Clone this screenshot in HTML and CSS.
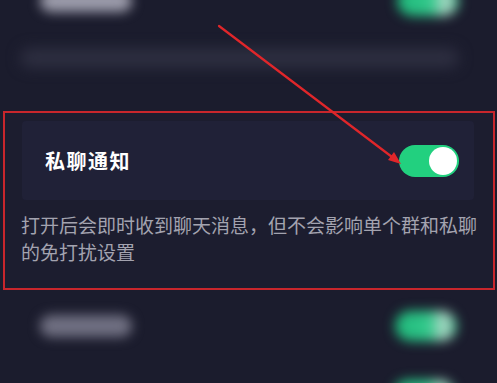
FILE: index.html
```html
<!DOCTYPE html>
<html>
<head>
  <title>私聊通知</title>
  <link rel="stylesheet" href="styles.css">
</head>
<body>
  <div class="screen">
    <!-- 上一项（模糊） -->
    <div class="row row-top">
      <div class="blob blob-text"></div>
      <div class="blob blob-switch"></div>
    </div>
    <div class="blob-line"></div>

    <div class="notice">
      <div class="card">
        <span class="card-title">私聊通知</span>
        <div class="switch on"><div class="knob"></div></div>
      </div>
      <p class="desc">打开后会即时收到聊天消息，但不会影响单个群和私聊的免打扰设置</p>
    </div>

    <!-- 下一项（模糊） -->
    <div class="row row-bottom">
      <div class="blob blob-text"></div>
      <div class="blob blob-switch"></div>
    </div>
    <div class="blob blob-switch blob-corner"></div>

    <svg class="arrow" width="497" height="383" viewBox="0 0 497 383">
      <line x1="219" y1="26" x2="396" y2="160" stroke="#e0262a" stroke-width="2.2" stroke-linecap="round"/>
      <polygon points="401,164 388,160 394,152" fill="#e0262a"/>
    </svg>
  </div>
</body>
</html>
```

FILE: styles.css
```css
body {
  margin: 0;
  background-color: #1b1c2d;
  font-family: "Noto Sans CJK SC", "Noto Sans", sans-serif;
}

.screen {
  position: relative;
  width: 497px;
  height: 383px;
  overflow: hidden;
  background-color: #1b1c2d;
}

.row {
  display: flex;
  justify-content: space-between;
  align-items: center;
  padding: 0 38px 0 40px;
}

.row-top {
  margin-top: -16px;
  height: 34px;
}

.blob {
  filter: blur(6px);
}

.blob-text {
  width: 92px;
  height: 22px;
  border-radius: 11px;
  background-color: #707082;
}

.row-top .blob-text {
  background-color: #9c9cab;
}

.blob-switch {
  width: 62px;
  height: 30px;
  border-radius: 15px;
  background: linear-gradient(90deg, #1fb77a 0%, #32c98b 55%, #b9d7cb 80%, #31b883 100%);
}

.blob-line {
  margin: 30px 38px 0 20px;
  height: 20px;
  border-radius: 10px;
  background-color: #2d2e40;
  filter: blur(7px);
}

.notice {
  margin: 43px 2px 0 3px;
  height: 179px;
  box-sizing: border-box;
  border: 2px solid #c8262c;
  padding: 8px 19px 0 17px;
  background-color: #1c1d2f;
}

.card {
  display: flex;
  align-items: center;
  justify-content: space-between;
  height: 79px;
  padding: 0 15px 0 23px;
  background-color: #202137;
  border-radius: 4px;
}

.card-title {
  color: #ffffff;
  font-size: 20px;
  font-weight: bold;
  letter-spacing: 1.5px;
}

.switch {
  width: 60px;
  height: 32px;
  border-radius: 16px;
  background-color: #22d07f;
  display: flex;
  align-items: center;
  justify-content: flex-end;
  padding: 0 2px;
  box-sizing: border-box;
}

.knob {
  width: 28px;
  height: 28px;
  border-radius: 50%;
  background-color: #ffffff;
}

.desc {
  margin: 11px -12px 0 -1px;
  color: #a3a3af;
  font-size: 19px;
  line-height: 27px;
}

.row-bottom {
  margin-top: 16px;
  height: 40px;
  padding: 0 40px 0 40px;
}

.blob-corner {
  margin: 34px 0 0 393px;
  width: 62px;
}

.arrow {
  position: absolute;
  left: 0;
  top: 0;
}
```
